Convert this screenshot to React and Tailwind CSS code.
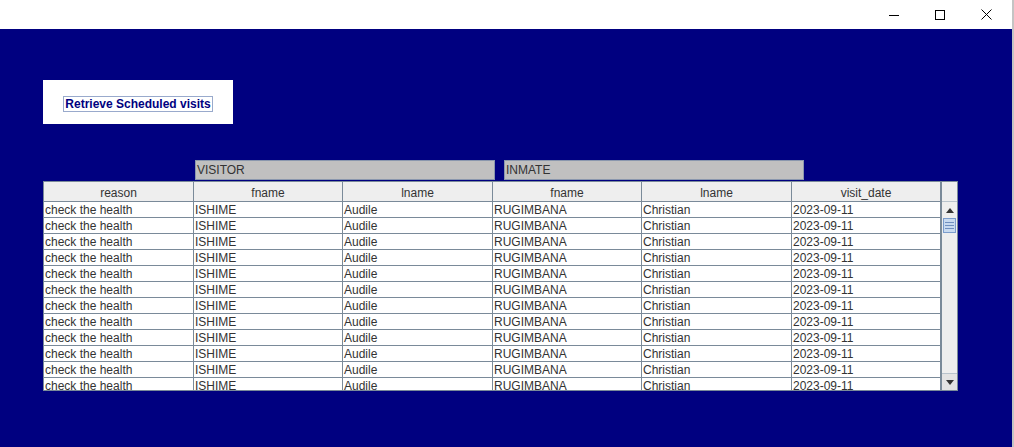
import React from 'react';

const columns = ['reason', 'fname', 'lname', 'fname', 'lname', 'visit_date'];
const widths = ['w-[150px]', 'w-[149px]', 'w-[150px]', 'w-[149px]', 'w-[150px]', 'w-[149px]'];

const rows = Array.from({ length: 12 }, () => [
  'check the health',
  'ISHIME',
  'Audile',
  'RUGIMBANA',
  'Christian',
  '2023-09-11',
]);

const TitleBar = () => (
  <div className="h-[29px] bg-white flex justify-end items-center shrink-0">
    <div className="w-[46px] h-[29px] flex items-center justify-center">
      <svg width="10" height="10" viewBox="0 0 10 10"><path d="M0 5.5h10" stroke="#000" strokeWidth="1" /></svg>
    </div>
    <div className="w-[46px] h-[29px] flex items-center justify-center">
      <svg width="10" height="10" viewBox="0 0 10 10"><rect x="0.5" y="0.5" width="9" height="9" fill="none" stroke="#000" strokeWidth="1" /></svg>
    </div>
    <div className="w-[46px] h-[29px] flex items-center justify-center mr-[3px]">
      <svg width="11" height="11" viewBox="0 0 11 11"><path d="M0.5 0.5l10 10M10.5 0.5l-10 10" stroke="#000" strokeWidth="1" /></svg>
    </div>
  </div>
);

const ScrollBar = () => (
  <div className="w-[16px] flex flex-col bg-[#eeeeee] border-l border-[#7a8a99]">
    <div className="h-[20px] border-b border-[#b8c3cc]" />
    <div className="h-[16px] flex items-center justify-center bg-[#eeeeee]">
      <svg width="8" height="5" viewBox="0 0 8 5"><path d="M0 5L4 0L8 5Z" fill="#333" /></svg>
    </div>
    <div className="h-[15px] mx-[1px] bg-[#c8daf0] border border-[#7a9ccc] flex flex-col items-center justify-center gap-[2px]">
      <div className="w-[9px] h-px bg-[#6f8fbf]" />
      <div className="w-[9px] h-px bg-[#6f8fbf]" />
      <div className="w-[9px] h-px bg-[#6f8fbf]" />
    </div>
    <div className="flex-1" />
    <div className="h-[17px] flex items-center justify-center bg-[#e3e3e3] border-t border-[#b8c3cc]">
      <svg width="8" height="5" viewBox="0 0 8 5"><path d="M0 0L4 5L8 0Z" fill="#333" /></svg>
    </div>
  </div>
);

export default function App() {
  return (
    <div className="w-[1014px] h-[447px] flex flex-col overflow-hidden border-r-2 border-[#c4c4c4]" style={{ fontFamily: '"Liberation Sans", Arial, sans-serif' }}>
      <TitleBar />
      <div className="flex-1 bg-[#000080] pl-[43px] pt-[51px]">
        <div className="w-[190px] h-[44px] bg-white flex items-center justify-center pt-[3px]">
          <div className="border border-[#99aacc] px-px h-[16px] flex items-center text-[12px] font-bold text-[#000080] leading-none">
            Retrieve Scheduled visits
          </div>
        </div>

        <div className="flex mt-[36px] ml-[152px] gap-[9px]">
          <div className="w-[300px] h-[20px] bg-[#c0c0c0] border border-[#8a97ad] text-[12px] text-[#333] leading-[19px] pl-[1px]">VISITOR</div>
          <div className="w-[300px] h-[20px] bg-[#c0c0c0] border border-[#8a97ad] text-[12px] text-[#333] leading-[19px] pl-[1px]">INMATE</div>
        </div>

        <div className="mt-px w-[915px] h-[210px] flex bg-white border border-[#7a8a99] text-[12px] text-[#333]">
          <div className="flex flex-col w-[897px] overflow-hidden">
            <div className="flex h-[20px] bg-[#eeeeee] border-b border-[#7a8a99] shrink-0">
              {columns.map((c, i) => (
                <div key={i} className={`${widths[i]} shrink-0 border-r border-[#7a8a99] flex items-center justify-center leading-none pt-[2px]`}>
                  {c}
                </div>
              ))}
            </div>
            <div className="flex flex-col">
              {rows.map((r, ri) => (
                <div key={ri} className="flex h-[16px] border-b border-[#7a8a99] shrink-0">
                  {r.map((v, ci) => (
                    <div key={ci} className={`${widths[ci]} shrink-0 border-r border-[#7a8a99] pl-[1px] pt-px leading-[15px] whitespace-nowrap overflow-hidden`}>
                      {v}
                    </div>
                  ))}
                </div>
              ))}
            </div>
          </div>
          <ScrollBar />
        </div>
      </div>
    </div>
  );
}
